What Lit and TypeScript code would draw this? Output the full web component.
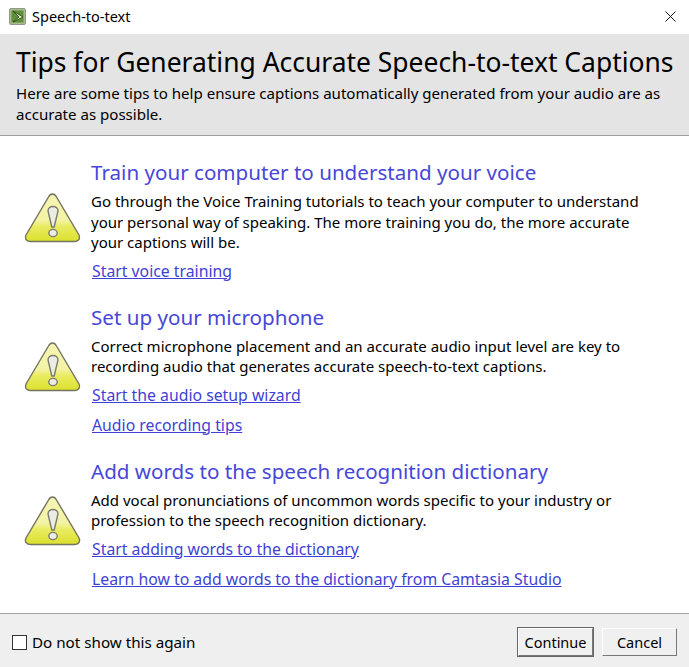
import { LitElement, html, css, svg } from 'lit';
import { customElement } from 'lit/decorators.js';

const warning = html`<svg class="warn" width="58" height="54" viewBox="0 0 58 54">
  <defs>
    <linearGradient id="tri" x1="0" y1="0" x2="0" y2="1">
      <stop offset="0" stop-color="#f5f5b4" />
      <stop offset="0.55" stop-color="#f3f3a6" />
      <stop offset="0.68" stop-color="#e9ec62" />
      <stop offset="1" stop-color="#dbe02c" />
    </linearGradient>
  </defs>
  <path d="M29.5 3 C31.5 3 32.5 4 33.5 6 L56 44 C57.5 47 56 50.5 52 50.5 L7 50.5 C3 50.5 1.5 47 3 44 L25.5 6 C26.5 4 27.5 3 29.5 3 Z" fill="url(#tri)" stroke="#73735f" stroke-width="1.4" />
  ${svg`<path d="M25 20 C25 14 35 14 35 20 L31.2 36 L28.8 36 Z" fill="#ecece4" stroke="#7b7b6e" stroke-width="1.4" />
  <ellipse cx="30" cy="42" rx="4.2" ry="3.6" fill="#ecece4" stroke="#7b7b6e" stroke-width="1.4" />`}
</svg>`;

const tips = [
  {
    title: 'Train your computer to understand your voice',
    lines: ['Go through the Voice Training tutorials to teach your computer to understand', 'your personal way of speaking. The more training you do, the more accurate', 'your captions will be.'],
    links: ['Start voice training'],
  },
  {
    title: 'Set up your microphone',
    lines: ['Correct microphone placement and an accurate audio input level are key to', 'recording audio that generates accurate speech-to-text captions.'],
    links: ['Start the audio setup wizard', 'Audio recording tips'],
  },
  {
    title: 'Add words to the speech recognition dictionary',
    lines: ['Add vocal pronunciations of uncommon words specific to your industry or', 'profession to the speech recognition dictionary.'],
    links: ['Start adding words to the dictionary', 'Learn how to add words to the dictionary from Camtasia Studio'],
  },
];

@customElement('app-root')
export class AppRoot extends LitElement {
  static styles = css`
    :host {
      display: flex;
      flex-direction: column;
      width: 689px;
      height: 667px;
      background: #fff;
      color: #000;
      font-family: 'Noto Sans', sans-serif;
      font-size: 15px;
      overflow: hidden;
    }
    .titlebar {
      height: 34px;
      flex: none;
      box-sizing: border-box;
      display: flex;
      align-items: center;
      padding: 0 13px 2px 9px;
      gap: 6px;
      font-size: 14.5px;
    }
    .titlebar .name { flex: 1; }
    .banner {
      height: 102px;
      flex: none;
      box-sizing: border-box;
      background: #e4e4e4;
      border-bottom: 1px solid #a0a0a0;
      padding: 10px 16px 0;
    }
    h1 {
      margin: 0 0 3px;
      font-size: 26.45px;
      font-weight: 400;
      line-height: 36px;
      white-space: nowrap;
    }
    .banner p { margin: 0; font-size: 15.07px; line-height: 20.5px; white-space: nowrap; }
    .content {
      flex: 1;
      display: flex;
      flex-direction: column;
      gap: 23px;
      padding: 23px 0 0 23px;
    }
    .tip {
      display: flex;
      gap: 10px;
      align-items: center;
    }
    .warn { flex: none; margin-bottom: 4px; }
    h2 {
      margin: 0 0 6px;
      color: #4747d8;
      font-size: 20.6px;
      font-weight: 400;
      line-height: 26px;
      white-space: nowrap;
    }
    .tip p { margin: 0; line-height: 20.5px; white-space: nowrap; }
    .links { display: flex; flex-direction: column; gap: 10px; margin-top: 8px; padding-left: 1px; }
    a { color: #3f3fd6; text-decoration: underline; font-size: 15.8px; line-height: 20px; cursor: pointer; }
    .links div { line-height: 20px; }
    .footer {
      height: 54px;
      flex: none;
      box-sizing: border-box;
      background: #efefef;
      border-top: 1px solid #a0a0a0;
      display: flex;
      align-items: center;
      padding: 3px 12px 0;
    }
    .check { display: flex; align-items: center; gap: 5px; flex: 1; font-size: 15.2px; }
    .box { width: 13px; height: 13px; background: #fff; border: 1px solid #333; }
    button {
      font: inherit;
      font-size: 14.5px;
      color: #000;
      height: 28px;
      box-sizing: border-box;
      background: #f0f0f0;
      border: 1px solid;
      border-color: #fff #777 #777 #fff;
      padding: 0;
    }
    .continue { width: 75px; margin-right: 9px; outline: 1px solid #666; box-shadow: 1px 1px 0 #666; }
    .cancel { width: 75px; }
  `;

  render() {
    return html`
      <div class="titlebar">
        <svg width="17" height="17" viewBox="0 0 17 17">
          <rect x="0.5" y="0.5" width="16" height="16" rx="1.5" fill="#a9bb8c" stroke="#8f9a88" />
          <rect x="2.5" y="2.5" width="12" height="12" fill="#5f8f3a" />
          <path d="M4 3 L14 9 L4 14 L10 9 Z" fill="#e6efd8" stroke="#20400f" stroke-width="0.8" />
        </svg>
        <span class="name">Speech-to-text</span>
        <svg width="11" height="11" viewBox="0 0 11 11"><path d="M0.5 0.5 L10.5 10.5 M10.5 0.5 L0.5 10.5" stroke="#111" fill="none" /></svg>
      </div>
      <div class="banner">
        <h1>Tips for Generating Accurate Speech-to-text Captions</h1>
        <p>Here are some tips to help ensure captions automatically generated from your audio are as<br />accurate as possible.</p>
      </div>
      <div class="content">
        ${tips.map(
          (t) => html`<div class="tip">
            ${warning}
            <div>
              <h2>${t.title}</h2>
              <p>${t.lines.map((l) => html`${l}<br />`)}</p>
              <div class="links">${t.links.map((l) => html`<div><a>${l}</a></div>`)}</div>
            </div>
          </div>`
        )}
      </div>
      <div class="footer">
        <div class="check"><span class="box"></span><span>Do not show this again</span></div>
        <button class="continue">Continue</button>
        <button class="cancel">Cancel</button>
      </div>
    `;
  }
}
